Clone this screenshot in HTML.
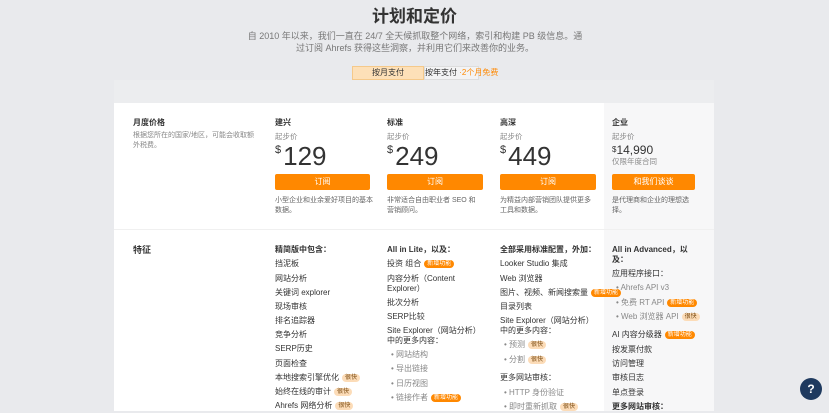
<!DOCTYPE html>
<html><head><meta charset="utf-8"><style>
*{margin:0;padding:0;box-sizing:border-box}
body{width:829px;height:411px;overflow:hidden;background:#e9eaed;font-family:"Liberation Sans","Noto Sans CJK SC",sans-serif;color:#333;position:relative}
.a{position:absolute;white-space:nowrap}
.t{position:absolute;white-space:nowrap;font-size:8px;line-height:12px;color:#333}
.g{color:#888}
.b{font-weight:bold}
.bd{display:inline-block;font-size:6px;line-height:8px;padding:0 3px;border-radius:4px;background:#ff8800;color:#fff;margin-left:3px;vertical-align:1px}
.bd.l{background:#fcdcb8;color:#7a4a10}
.btn{position:absolute;top:174px;height:16px;background:#ff8800;color:#fff;font-size:8px;line-height:16px;text-align:center;border-radius:2px}
.pr{position:absolute;top:141px;font-size:26px;color:#333;line-height:30px}
.pr span{font-size:11px;vertical-align:top;line-height:18px;margin-right:2px}
.d{position:absolute;font-size:7px;line-height:10px;color:#666;white-space:normal}
</style></head><body>
<div class="a b" style="left:0;width:829px;text-align:center;top:6px;font-size:17px;line-height:22px;color:#333">计划和定价</div>
<div class="a" style="left:200px;width:430px;text-align:center;top:30px;font-size:9px;line-height:12px;color:#777">自 2010 年以来，我们一直在 24/7 全天候抓取整个网络，索引和构建 PB 级信息。通<br>过订阅 Ahrefs 获得这些洞察，并利用它们来改善你的业务。</div>
<div class="a" style="left:352px;top:66px;width:72px;height:14px;background:#fde0b8;border:1px solid #f5c98a;font-size:8px;line-height:12px;text-align:center">按月支付</div>
<div class="a" style="left:424px;top:66px;width:55px;height:14px;background:#f3f3f4;border:1px solid #ddd;font-size:8px;line-height:12px;text-align:center">按年支付 <span style="color:#ff8800">·2个月免费</span></div>
<div class="a" style="left:114px;top:80px;width:600px;height:23px;background:#ecedef"></div>
<div class="a" style="left:114px;top:103px;width:490px;height:308px;background:#fff"></div>
<div class="a" style="left:604px;top:103px;width:110px;height:308px;background:#f7f7f8"></div>
<div class="a" style="left:114px;top:229px;width:600px;height:1px;background:#f0f0f0"></div>

<div class="t b" style="left:133px;top:117px">月度价格</div>
<div class="d" style="left:133px;top:131px;width:125px;color:#888">根据您所在的国家/地区，可能会收取额外税费。</div>

<div class="t b" style="left:275px;top:117px">建兴</div>
<div class="t g" style="left:275px;top:131px;font-size:7.5px">起步价</div>
<div class="pr" style="left:275px"><span>$</span>129</div>
<div class="btn" style="left:275px;width:95px">订阅</div>
<div class="d" style="left:275px;top:196px;width:100px">小型企业和业余爱好项目的基本数据。</div>

<div class="t b" style="left:387px;top:117px">标准</div>
<div class="t g" style="left:387px;top:131px;font-size:7.5px">起步价</div>
<div class="pr" style="left:387px"><span>$</span>249</div>
<div class="btn" style="left:387px;width:96px">订阅</div>
<div class="d" style="left:387px;top:196px;width:92px">非常适合自由职业者 SEO 和营销顾问。</div>

<div class="t b" style="left:500px;top:117px">高深</div>
<div class="t g" style="left:500px;top:131px;font-size:7.5px">起步价</div>
<div class="pr" style="left:500px"><span>$</span>449</div>
<div class="btn" style="left:500px;width:96px">订阅</div>
<div class="d" style="left:500px;top:196px;width:92px">为精益内部营销团队提供更多工具和数据。</div>

<div class="t b" style="left:612px;top:117px">企业</div>
<div class="t g" style="left:612px;top:131px;font-size:7.5px">起步价</div>
<div class="a" style="left:612px;top:142px;font-size:12px;line-height:16px"><span style="font-size:8px;vertical-align:top">$</span>14,990</div>
<div class="t g" style="left:612px;top:156px;font-size:7.5px">仅限年度合同</div>
<div class="btn" style="left:612px;width:83px">和我们谈谈</div>
<div class="d" style="left:612px;top:196px;width:88px">是代理商和企业的理想选择。</div>

<div class="t b" style="left:133px;top:244px;font-size:9px">特征</div>

<div class="t b" style="left:275px;top:244px">精简版中包含：</div>
<div class="t" style="left:275px;top:258px">挡泥板</div>
<div class="t" style="left:275px;top:273px">网站分析</div>
<div class="t" style="left:275px;top:287px">关键词 explorer</div>
<div class="t" style="left:275px;top:301px">现场审核</div>
<div class="t" style="left:275px;top:315px">排名追踪器</div>
<div class="t" style="left:275px;top:329px">竞争分析</div>
<div class="t" style="left:275px;top:343px">SERP历史</div>
<div class="t" style="left:275px;top:358px">页面检查</div>
<div class="t" style="left:275px;top:372px">本地搜索引擎优化<span class="bd l">很快</span></div>
<div class="t" style="left:275px;top:386px">始终在线的审计<span class="bd l">很快</span></div>
<div class="t" style="left:275px;top:400px">Ahrefs 网络分析<span class="bd l">很快</span></div>

<div class="t b" style="left:387px;top:244px">All in Lite，以及：</div>
<div class="t" style="left:387px;top:258px">投资 组合<span class="bd">新增功能</span></div>
<div class="t" style="left:387px;top:273px">内容分析（Content</div>
<div class="t" style="left:387px;top:283px">Explorer）</div>
<div class="t" style="left:387px;top:297px">批次分析</div>
<div class="t" style="left:387px;top:311px">SERP比较</div>
<div class="t" style="left:387px;top:325px">Site Explorer（网站分析）</div>
<div class="t" style="left:387px;top:335px">中的更多内容：</div>
<div class="t g" style="left:391px;top:349px">• 网站结构</div>
<div class="t g" style="left:391px;top:363px">• 导出链接</div>
<div class="t g" style="left:391px;top:378px">• 日历视图</div>
<div class="t g" style="left:391px;top:392px">• 链接作者<span class="bd">新增功能</span></div>

<div class="t b" style="left:500px;top:244px">全部采用标准配置，外加：</div>
<div class="t" style="left:500px;top:258px">Looker Studio 集成</div>
<div class="t" style="left:500px;top:273px">Web 浏览器</div>
<div class="t" style="left:500px;top:287px">图片、视频、新闻搜索量<span class="bd">新增功能</span></div>
<div class="t" style="left:500px;top:301px">目录列表</div>
<div class="t" style="left:500px;top:315px">Site Explorer（网站分析）</div>
<div class="t" style="left:500px;top:325px">中的更多内容：</div>
<div class="t g" style="left:504px;top:339px">• 预测<span class="bd l">很快</span></div>
<div class="t g" style="left:504px;top:354px">• 分割<span class="bd l">很快</span></div>
<div class="t" style="left:500px;top:372px">更多网站审核：</div>
<div class="t g" style="left:504px;top:387px">• HTTP 身份验证</div>
<div class="t g" style="left:504px;top:401px">• 即时重新抓取<span class="bd l">很快</span></div>

<div class="t b" style="left:612px;top:244px">All in Advanced，以</div>
<div class="t b" style="left:612px;top:254px">及：</div>
<div class="t" style="left:612px;top:268px">应用程序接口：</div>
<div class="t g" style="left:616px;top:282px">• Ahrefs API v3</div>
<div class="t g" style="left:616px;top:297px">• 免费 RT API<span class="bd">新增功能</span></div>
<div class="t g" style="left:616px;top:311px">• Web 浏览器 API<span class="bd l">很快</span></div>
<div class="t" style="left:612px;top:329px">AI 内容分级器<span class="bd">新增功能</span></div>
<div class="t" style="left:612px;top:344px">按发票付款</div>
<div class="t" style="left:612px;top:358px">访问管理</div>
<div class="t" style="left:612px;top:372px">审核日志</div>
<div class="t" style="left:612px;top:387px">单点登录</div>
<div class="t b" style="left:612px;top:401px">更多网站审核：</div>

<div class="a" style="left:800px;top:378px;width:22px;height:22px;border-radius:50%;background:#1f3a5f;color:#fff;font-size:12px;font-weight:bold;line-height:22px;text-align:center">?</div>
</body></html>
